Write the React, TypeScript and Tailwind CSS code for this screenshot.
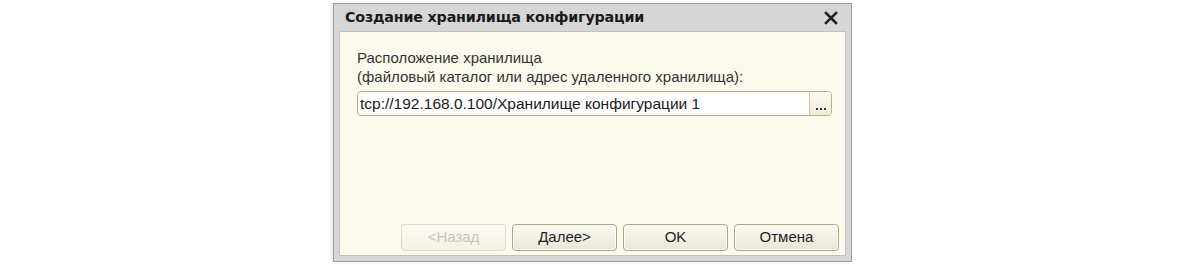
export default function App() {
  return (
    <div className="w-[1200px] h-[265px] bg-white overflow-hidden font-['Liberation_Sans',Arial,sans-serif]">
      <div className="ml-[333px] mt-[3px] w-[519px] h-[259px] border border-[#9c9c9c] bg-[#d6d6d6] flex flex-col shadow-[-2px_0_3px_rgba(0,0,0,0.08)]">
        {/* Title bar */}
        <div className="h-[27px] flex items-center justify-between pl-[11px] pr-[11px]">
          <span className="text-[14.3px] font-bold text-[#1a1a1a] tracking-[-0.2px] font-['DejaVu_Sans',sans-serif]">
            Создание хранилища конфигурации
          </span>
          <svg width="14" height="14" viewBox="0 0 14 14" className="mr-[2px]">
            <path d="M2 2 L12 12 M12 2 L2 12" stroke="#222" strokeWidth="2.6" strokeLinecap="square" />
          </svg>
        </div>

        {/* Content */}
        <div className="flex-1 mx-[5px] mb-[5px] bg-[#fcfaed] border border-[#c4c2b6] flex flex-col">
          <div className="pl-[17px] pr-[13px] pt-[16px]">
            <p className="text-[15px] leading-[19px] text-[#333]">Расположение хранилища</p>
            <p className="text-[15px] leading-[19px] text-[#333]">
              (файловый каталог или адрес удаленного хранилища):
            </p>
            <div className="mt-[5px] flex h-[25px] border border-[#b7b08a] rounded-[4px] bg-white overflow-hidden">
              <div className="flex-1 flex items-center pl-[2px] text-[15.5px] text-[#1a1a1a] whitespace-nowrap">
                tcp://192.168.0.100/Хранилище конфигурации 1
              </div>
              <div className="w-[22px] border-l border-[#cfc9a6] bg-gradient-to-b from-[#fbfaf2] to-[#efecdb] flex items-end justify-center pb-[5px]">
                <span className="flex gap-[2px]">
                  <span className="w-[2px] h-[2px] bg-[#333]" />
                  <span className="w-[2px] h-[2px] bg-[#333]" />
                  <span className="w-[2px] h-[2px] bg-[#333]" />
                </span>
              </div>
            </div>
          </div>

          <div className="mt-auto flex justify-end gap-[6px] pr-[6px] pb-[4px]">
            <DialogButton label="<Назад" disabled />
            <DialogButton label="Далее>" />
            <DialogButton label="OK" />
            <DialogButton label="Отмена" />
          </div>
        </div>
      </div>
    </div>
  );
}

function DialogButton({ label, disabled }: { label: string; disabled?: boolean }) {
  return (
    <div
      className={
        disabled
          ? "w-[105px] h-[27px] rounded-[4px] border border-[#dcd8c4] bg-gradient-to-b from-[#fdfcf6] to-[#f4f1e4] flex items-center justify-center text-[15px] text-[#c9c5b2]"
          : "w-[105px] h-[27px] rounded-[4px] border border-[#aba58a] bg-gradient-to-b from-[#fbfaf3] to-[#ebe7d4] flex items-center justify-center text-[15px] text-[#1f1f1f] shadow-[inset_0_0_0_1px_#fffef8]"
      }
    >
      {label}
    </div>
  );
}
